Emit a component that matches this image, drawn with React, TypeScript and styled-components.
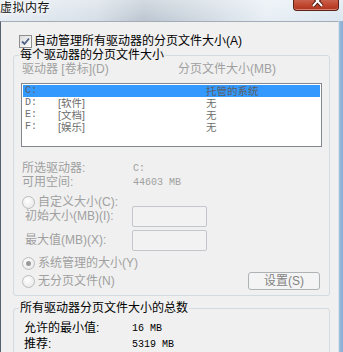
import React from "react";
import styled, { createGlobalStyle } from "styled-components";

const GlobalStyle = createGlobalStyle`
	html, body {
		margin: 0;
		padding: 0;
		width: 343px;
		height: 352px;
		overflow: hidden;
		background: #f0f0f0;
	}
`;

const Screen = styled.div`
	width: 343px;
	height: 352px;
	display: flex;
	flex-direction: column;
	overflow: hidden;
	font-family: "Liberation Sans", "Noto Sans CJK SC", sans-serif;
	font-size: 12px;
	line-height: 13px;
	color: #000000;
`;

const TitleBar = styled.div`
	height: 21px;
	flex-shrink: 0;
	display: flex;
	justify-content: space-between;
	align-items: flex-start;
	padding-right: 4px;
	background:
		linear-gradient(180deg, rgba(255, 255, 255, 0.35), rgba(255, 255, 255, 0)),
		linear-gradient(90deg, #e6edf4 0%, #d6dee7 28%, #bcc6d0 42%, #cfd8e1 58%, #e7eef5 78%, #dbe6f0 100%);
`;

const Title = styled.div`
	padding: 2px 0 0 0;
	font-size: 12px;
	letter-spacing: 0.5px;
	color: #101010;
	text-shadow: 0 0 5px #ffffff, 0 0 3px #ffffff;
`;

const CloseButton = styled.div`
	width: 46px;
	height: 11px;
	box-sizing: border-box;
	border: 1px solid #5b2219;
	border-top: none;
	border-radius: 0 0 4px 4px;
	background: linear-gradient(180deg, #c9614d 0%, #c0442d 55%, #a83420 100%);
	box-shadow: inset 0 -1px 0 #d9826f;
	overflow: hidden;
`;

const WindowBody = styled.div`
	flex: 1;
	display: flex;
	min-height: 0;
`;

const Client = styled.div`
	flex: 1;
	display: flex;
	flex-direction: column;
	background: #f0f0f0;
	border-left: 1px solid #56616e;
	border-top: 1px solid #a3adb8;
	border-right: 1px solid #dbe4ee;
`;

const RightFrame = styled.div`
	width: 4px;
	flex-shrink: 0;
	background: linear-gradient(90deg, #9fbfdd, #86acd3);
`;

const CheckRow = styled.label`
	display: flex;
	align-items: center;
	gap: 2px;
	height: 13px;
	margin: 13px 0 0 18px;
`;

const CheckBox = styled.span`
	width: 13px;
	height: 13px;
	box-sizing: border-box;
	border: 1px solid #8e8f8f;
	background: linear-gradient(135deg, #dcdcdc, #ffffff);
	display: flex;
	align-items: center;
	justify-content: center;
`;

const Group = styled.fieldset<{ $top: number }>`
	margin: ${(p) => p.$top}px 8px 0 12px;
	padding: 0 7px 5px 7px;
	border: 1px solid #d2dbe2;
	border-radius: 3px;
	min-width: 0;
	display: flex;
	flex-direction: column;
`;

const Legend = styled.legend`
	padding: 0 1px;
	margin-left: -2px;
	line-height: 13px;
`;

const HeaderRow = styled.div`
	display: grid;
	grid-template-columns: 156px 1fr;
	height: 13px;
	margin-top: 1px;
	padding-left: 1px;
	color: #a0a0a0;
`;

const ListBox = styled.div`
	margin-top: 7px;
	height: 64px;
	box-sizing: border-box;
	border: 1px solid #828790;
	background: #ffffff;
	padding: 1px 1px 0 1px;
`;

const ListRow = styled.div<{ $selected?: boolean }>`
	display: grid;
	grid-template-columns: 33px 148px 1fr;
	align-items: center;
	height: 12px;
	line-height: 12px;
	font-size: 10.5px;
	padding-left: 2px;
	color: ${(p) => (p.$selected ? "#5e5e5e" : "#6d6d6d")};
	background: ${(p) => (p.$selected ? "#3399ff" : "transparent")};
`;

const Mono = styled.span`
	font-family: "Liberation Mono", "DejaVu Sans Mono", monospace;
	font-size: 10px;
`;

const InfoRow = styled.div<{ $top?: number }>`
	display: grid;
	grid-template-columns: 111px 1fr;
	height: 14px;
	margin-top: ${(p) => p.$top || 0}px;
	padding-left: 1px;
	color: #a0a0a0;
`;

const RadioRow = styled.div<{ $top: number }>`
	display: flex;
	align-items: center;
	gap: 3px;
	height: 13px;
	margin-top: ${(p) => p.$top}px;
	padding-left: 1px;
	color: #a0a0a0;
`;

const Radio = styled.span<{ $checked?: boolean }>`
	width: 13px;
	height: 13px;
	box-sizing: border-box;
	border-radius: 50%;
	border: 1px solid #bcbcbc;
	background: radial-gradient(circle at 40% 35%, #ffffff, #e4e4e4);
	display: flex;
	align-items: center;
	justify-content: center;

	&::after {
		content: "";
		width: 5px;
		height: 5px;
		border-radius: 50%;
		background: ${(p) => (p.$checked ? "#9a9a9a" : "transparent")};
	}
`;

const FieldRow = styled.div<{ $top: number }>`
	display: grid;
	grid-template-columns: 107px 75px;
	align-items: center;
	height: 21px;
	margin-top: ${(p) => p.$top}px;
	padding-left: 4px;
	color: #a0a0a0;
`;

const TextBox = styled.input`
	width: 75px;
	height: 21px;
	box-sizing: border-box;
	border: 1px solid #c3c7cb;
	border-radius: 2px;
	background: #f2f2f2;
	margin: 0;
`;

const BottomRow = styled.div`
	display: flex;
	justify-content: space-between;
	align-items: center;
	height: 18px;
	margin-top: 2px;
`;

const SetButton = styled.button`
	width: 72px;
	height: 18px;
	margin-right: 2px;
	padding: 0;
	border: 1px solid #adb2b5;
	border-radius: 3px;
	background: #f4f4f4;
	color: #838383;
	font-family: inherit;
	font-size: 12px;
	line-height: 13px;
`;

const TotalRow = styled.div<{ $top?: number }>`
	display: grid;
	grid-template-columns: 108px 1fr;
	height: 15px;
	align-items: center;
	margin-top: ${(p) => p.$top || 0}px;
	padding-left: 3px;
`;

const drives = [
	{ letter: "C:", label: "", size: "托管的系统", selected: true },
	{ letter: "D:", label: "[软件]", size: "无" },
	{ letter: "E:", label: "[文档]", size: "无" },
	{ letter: "F:", label: "[娱乐]", size: "无" },
];

const App = () => {
	return (
		<Screen>
			<GlobalStyle />

			<TitleBar>
				<Title>虚拟内存</Title>
				<CloseButton>
					<svg width="46" height="11" viewBox="0 0 46 11">
						<path d="M19 -4 L28 6 M28 -4 L19 6" stroke="#4a1a14" strokeWidth="4" />
						<path d="M19 -4 L28 6 M28 -4 L19 6" stroke="#ffffff" strokeWidth="2" />
					</svg>
				</CloseButton>
			</TitleBar>

			<WindowBody>
				<Client>
					<CheckRow>
						<CheckBox>
							<svg width="11" height="11" viewBox="0 0 11 11">
								<path d="M2 5.5 L4.5 8 L9 2.5" fill="none" stroke="#4d6185" strokeWidth="1.8" />
							</svg>
						</CheckBox>
						自动管理所有驱动器的分页文件大小(A)
					</CheckRow>

					<Group $top={1}>
						<Legend>每个驱动器的分页文件大小</Legend>

						<HeaderRow>
							<span>驱动器 [卷标](D)</span>
							<span>分页文件大小(MB)</span>
						</HeaderRow>

						<ListBox>
							{drives.map((d) => (
								<ListRow key={d.letter} $selected={d.selected}>
									<Mono>{d.letter}</Mono>
									<span>{d.label}</span>
									<span>{d.size}</span>
								</ListRow>
							))}
						</ListBox>

						<InfoRow $top={15}>
							<span>所选驱动器:</span>
							<Mono>C:</Mono>
						</InfoRow>
						<InfoRow>
							<span>可用空间:</span>
							<Mono>44603 MB</Mono>
						</InfoRow>

						<RadioRow $top={6}>
							<Radio />
							自定义大小(C):
						</RadioRow>

						<FieldRow $top={-3}>
							<span>初始大小(MB)(I):</span>
							<TextBox disabled />
						</FieldRow>
						<FieldRow $top={3}>
							<span>最大值(MB)(X):</span>
							<TextBox disabled />
						</FieldRow>

						<RadioRow $top={6}>
							<Radio $checked />
							系统管理的大小(Y)
						</RadioRow>

						<BottomRow>
							<RadioRow $top={0}>
								<Radio />
								无分页文件(N)
							</RadioRow>
							<SetButton disabled>设置(S)</SetButton>
						</BottomRow>
					</Group>

					<Group $top={6}>
						<Legend>所有驱动器分页文件大小的总数</Legend>
						<TotalRow $top={6}>
							<span>允许的最小值:</span>
							<Mono>16 MB</Mono>
						</TotalRow>
						<TotalRow $top={1}>
							<span>推荐:</span>
							<Mono>5319 MB</Mono>
						</TotalRow>
					</Group>
				</Client>
				<RightFrame />
			</WindowBody>
		</Screen>
	);
};

export default App;
